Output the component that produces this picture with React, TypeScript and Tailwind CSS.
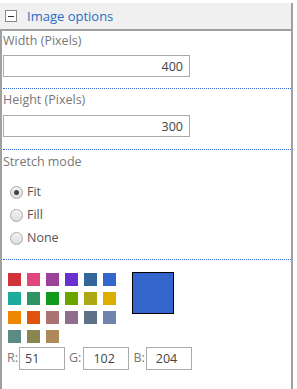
import React, { useState } from 'react';

const swatches = [
  ['#d13438', '#e0457b', '#9b4199', '#6a2fcf', '#336699', '#3366cc'],
  ['#1fab9c', '#2e9466', '#109a1e', '#69a600', '#aca914', '#dbae00'],
  ['#f08700', '#e05410', '#ac7373', '#8d6e8d', '#5e7287', '#6f84ad'],
  ['#5c8a85', '#898550', '#ae8a5a'],
];

const App: React.FC = () => {
  const [mode, setMode] = useState('Fit');

  return (
    <div className="w-[297px] h-[389px] bg-white pt-[3px] text-[12.5px] text-[#777]" style={{ fontFamily: '"Open Sans", "Noto Sans", sans-serif' }}>
      <div className="w-[293px] h-[386px] border-r-2 border-[#a0a0a0] flex flex-col">
        {/* Header */}
        <div className="h-[28px] bg-[#f0f0f0] border-b-2 border-[#a0a0a0] flex items-center pl-[5px]">
          <div className="w-[12px] h-[12px] border border-[#888] bg-white flex items-center justify-center">
            <div className="w-[6px] h-[1px] bg-[#333]"></div>
          </div>
          <span className="ml-[10px] text-[#2b6cc4] text-[13px] leading-none">Image options</span>
        </div>

        <div className="flex-1 border-l-2 border-[#a0a0a0] pl-[1px]">
          {/* Width */}
          <div className="pt-[1px] pb-[11px] border-b border-dotted border-[#3366cc]">
            <div className="leading-[18px]">Width (Pixels)</div>
            <input
              defaultValue="400"
              className="mt-[5px] w-[187px] h-[22px] border border-[#aaa] text-right pr-[6px] text-[#444] outline-none"
            />
          </div>

          {/* Height */}
          <div className="pt-[2px] pb-[12px] border-b border-dotted border-[#3366cc]">
            <div className="leading-[18px]">Height (Pixels)</div>
            <input
              defaultValue="300"
              className="mt-[6px] w-[187px] h-[22px] border border-[#aaa] text-right pr-[6px] text-[#444] outline-none"
            />
          </div>

          {/* Stretch mode */}
          <div className="pt-[3px] pb-[12px] border-b border-dotted border-[#3366cc]">
            <div className="leading-[18px]">Stretch mode</div>
            <div className="mt-[12px] pl-[7px] flex flex-col gap-[5px]">
              {['Fit', 'Fill', 'None'].map((m) => (
                <label key={m} className="flex items-center gap-[4px] h-[18px] text-[#555] cursor-pointer" onClick={() => setMode(m)}>
                  <span className="w-[13px] h-[13px] rounded-full border border-[#aaa] bg-gradient-to-b from-[#f4f4f4] to-[#dcdcdc] flex items-center justify-center">
                    {mode === m && <span className="w-[5px] h-[5px] rounded-full bg-[#444]"></span>}
                  </span>
                  {m}
                </label>
              ))}
            </div>
          </div>

          {/* Colours */}
          <div className="pt-[13px] pl-[5px] flex">
            <div className="flex flex-col gap-[6px]">
              {swatches.map((row, i) => (
                <div key={i} className="flex gap-[6px]">
                  {row.map((c) => (
                    <div key={c} className="w-[13px] h-[13px]" style={{ backgroundColor: c }}></div>
                  ))}
                </div>
              ))}
            </div>
            <div className="ml-[16px] -mt-[1px] w-[42px] h-[42px] border border-black bg-[#3366cc]"></div>
          </div>

          <div className="mt-[4px] pl-[4px] flex items-center text-[#777]">
            <span>R:</span>
            <input defaultValue="51" className="ml-[1px] w-[46px] h-[23px] border border-[#aaa] pl-[5px] text-[#444] outline-none" />
            <span className="ml-[4px]">G:</span>
            <input defaultValue="102" className="ml-[2px] w-[46px] h-[23px] border border-[#aaa] pl-[9px] text-[#444] outline-none" />
            <span className="ml-[4px]">B:</span>
            <input defaultValue="204" className="ml-[1px] w-[46px] h-[23px] border border-[#aaa] pl-[9px] text-[#444] outline-none" />
          </div>
        </div>
      </div>
    </div>
  );
};

export default App;
